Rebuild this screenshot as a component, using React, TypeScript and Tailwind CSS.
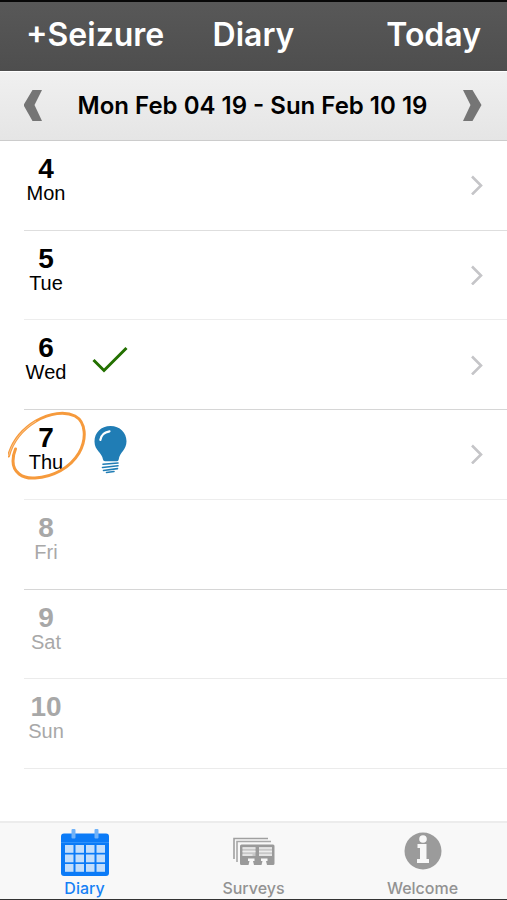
import type { ReactNode } from "react";

type Day = { date: number; name: string; mark?: "check" | "bulb"; today?: boolean; future?: boolean; line: string };

const days: Day[] = [
  { date: 4, name: "Mon", line: "border-[#dedede]" },
  { date: 5, name: "Tue", line: "border-[#ededed]" },
  { date: 6, name: "Wed", mark: "check", line: "border-[#d6d6d6]" },
  { date: 7, name: "Thu", mark: "bulb", today: true, line: "border-[#ededed]" },
  { date: 8, name: "Fri", future: true, line: "border-[#d6d6d6]" },
  { date: 9, name: "Sat", future: true, line: "border-[#ebebeb]" },
  { date: 10, name: "Sun", future: true, line: "border-[#ebebeb]" },
];

function CheckMark() {
  return (
    <svg className="h-12 w-9" viewBox="0 0 36 48" fill="none" aria-label="Completed">
      <path d="M1.5 24 L12 34.5 L34.5 12" stroke="#237000" strokeWidth="3" />
    </svg>
  );
}

function Bulb() {
  return (
    <svg className="h-12 w-9" viewBox="0 0 36 48" aria-label="Note">
      <path
        d="M18.5 0 C9 0 2.5 6.7 2.5 15.5 C2.5 24.5 10 26.5 11 33.5 Q11.2 35.2 13 35.2 H25 Q26.5 35 26.7 33.5 C27.7 26.2 34.5 24 34.5 15.3 C34.5 6.7 28 0 18.5 0 Z"
        fill="#207db5"
      />
      <path d="M8.3 14 Q9.2 6.8 17.5 5.3" fill="none" stroke="#fff" strokeWidth="2.2" strokeLinecap="round" />
      <path
        d="M11 38.3 L26 37 M10.5 41.5 L26 39.8 M11.5 44.5 L25.5 42.6 M14.5 46.5 L22 45.5"
        stroke="#207db5"
        strokeWidth="1.6"
        strokeLinecap="round"
      />
    </svg>
  );
}

function TodayRing() {
  return (
    <svg className="pointer-events-none absolute top-0 left-2 h-[72px] w-20" viewBox="0 0 80 72" fill="none" aria-hidden="true">
      <path
        d="M0.5 46 C4 33 13 20 28 11 C42 3 57 1 67 6 C78 12 79 29 71 43 C62 58 45 67 27 68 C14 69 5 62 5 51 Q5 45 7.5 39"
        stroke="#f69a3c"
        strokeWidth="3"
        strokeLinecap="round"
      />
      <path d="M0.5 46 C4 33 13 20 28 11" stroke="#fff" strokeWidth="1" opacity="0.4" />
    </svg>
  );
}

function DayRow({ day }: { day: Day }) {
  return (
    <li className="grid">
      <button type="button" disabled={day.future} className="relative flex pl-6 text-left">
        <span className={`flex flex-1 items-start border-b ${day.line}`}>
          <span className={`flex w-11 flex-col items-center pt-3 ${day.future ? "text-[#a8a8a8]" : "text-black"}`}>
            <span className="text-[28px] leading-8 font-bold">{day.date}</span>
            <span className="text-[20px] leading-4">{day.name}</span>
          </span>
          <span className="ml-6 pt-4">
            {day.mark === "bulb" && <Bulb />}
            {day.mark === "check" && <CheckMark />}
          </span>
          {!day.future && (
            <svg className="mr-6 ml-auto h-5 w-3 self-center" viewBox="0 0 12 20" fill="none" aria-hidden="true">
              <path d="M1 1.5 L10 10.5 L1 19.5" stroke="#c5c5c8" strokeWidth="2.6" />
            </svg>
          )}
        </span>
        {day.today && <TodayRing />}
      </button>
    </li>
  );
}

function CalendarIcon() {
  return (
    <svg className="h-12 w-12" viewBox="0 0 48 48" aria-hidden="true">
      <rect x="0" y="4.5" width="48" height="42.5" rx="3" fill="#0b7bf7" />
      <path d="M0 13.5 H48" stroke="#2f91fa" />
      {[16, 25.5, 35].map((y) =>
        [4, 14.5, 25, 35.5].map((x) => <rect key={`${x}-${y}`} x={x} y={y} width="8.5" height="7.8" fill="#c3defb" />),
      )}
      <rect x="10.5" y="0" width="4" height="9.5" rx="1" fill="#70b2f8" />
      <rect x="33.5" y="0" width="4" height="9.5" rx="1" fill="#70b2f8" />
    </svg>
  );
}

function SurveysIcon() {
  return (
    <svg className="h-12 w-12" viewBox="0 0 48 48" fill="none" aria-hidden="true">
      <path d="M4 30 V9.5 H38" stroke="#a0a0a0" strokeWidth="1.6" />
      <path d="M7 33 V12.5 H41" stroke="#a8a8a8" strokeWidth="1.6" />
      <path
        d="M11.5 15.5 H43 Q44.5 15.5 44.5 17 V34.5 Q44.5 36 43 36 H37 L36 32 H37.5 V29.5 H31 V32 H32.5 L31.5 36 H24 L23 32 H24.5 V29.5 H18 V32 H19.5 L18.5 36 H11.5 Q10 36 10 34.5 V17 Q10 15.5 11.5 15.5 Z"
        fill="#9a9a9a"
      />
      <path d="M12.5 18.5 H25.5 V27 H12.5 Z M29 18.5 H42 V27 H29 Z" fill="#c8c8c8" />
      <path d="M12.5 19 H25.5 M12.5 22.5 H25.5 M12.5 26 H22.5 M29 19 H42 M29 22.5 H42 M29 26 H42" stroke="#ededed" strokeWidth="1.5" />
    </svg>
  );
}

function InfoIcon() {
  return (
    <svg className="h-12 w-12" viewBox="0 0 48 48" aria-hidden="true">
      <circle cx="24" cy="22" r="18.5" fill="#9b9b9b" />
      <circle cx="24" cy="10" r="3.8" fill="#f8f8f8" />
      <path d="M18.5 15 H27.5 V30 H30 V34 H18 V30 H21 V19 H18.5 Z" fill="#f8f8f8" />
    </svg>
  );
}

function Tab({ label, active, children }: { label: string; active?: boolean; children: ReactNode }) {
  return (
    <a
      href={`#${label.toLowerCase()}`}
      className={`flex flex-col items-center pt-1.5 text-[16px] leading-5 font-medium ${active ? "text-[#1680f5]" : "text-[#929292]"}`}
    >
      {children}
      <span className="pt-px">{label}</span>
    </a>
  );
}

export default function App() {
  return (
    <div className="flex min-h-screen flex-col border-t-2 border-b border-t-[#080808] border-b-[#333] bg-white font-['Liberation_Sans',sans-serif]">
      <header className="grid h-[69px] grid-cols-[1fr_auto_1fr] items-center bg-linear-to-b from-[#585858] to-[#4e4e4e] px-[26px] pb-1 font-['Inter',sans-serif] text-[32px] font-semibold text-white">
        <button type="button" className="justify-self-start">+Seizure</button>
        <h1>Diary</h1>
        <button type="button" className="justify-self-end">Today</button>
      </header>
      <nav className="flex h-[70px] items-center justify-between border-t border-b border-t-white border-b-[#cccccc] bg-linear-to-b from-[#f0f0f0] to-[#e5e5e5] px-6 font-['Inter',sans-serif]" aria-label="Week">
        <button type="button" aria-label="Previous week">
          <svg className="h-8 w-[18px]" viewBox="0 0 18 32" aria-hidden="true">
            <path d="M8.5 0 H18 L10.5 15 L18 31 H8.5 L-0.5 15 Z" fill="#757575" />
          </svg>
        </button>
        <h2 className="text-[24px] font-semibold whitespace-nowrap text-black">Mon Feb 04 19 - Sun Feb 10 19</h2>
        <button type="button" aria-label="Next week">
          <svg className="h-8 w-5" viewBox="0 0 20 32" aria-hidden="true">
            <path d="M0 0 H9.5 L18.5 15 L9.5 31 H0 L7.5 15 Z" fill="#757575" />
          </svg>
        </button>
      </nav>
      <main className="flex flex-1 flex-col pb-13">
        <ul className="grid flex-1 auto-rows-fr">
          {days.map((day) => (
            <DayRow key={day.date} day={day} />
          ))}
        </ul>
      </main>
      <nav className="grid h-[78px] grid-cols-3 border-t-2 border-[#ececec] bg-[#f8f8f8] font-['Inter',sans-serif]" aria-label="Main">
        <Tab label="Diary" active>
          <CalendarIcon />
        </Tab>
        <Tab label="Surveys">
          <SurveysIcon />
        </Tab>
        <Tab label="Welcome">
          <InfoIcon />
        </Tab>
      </nav>
    </div>
  );
}
